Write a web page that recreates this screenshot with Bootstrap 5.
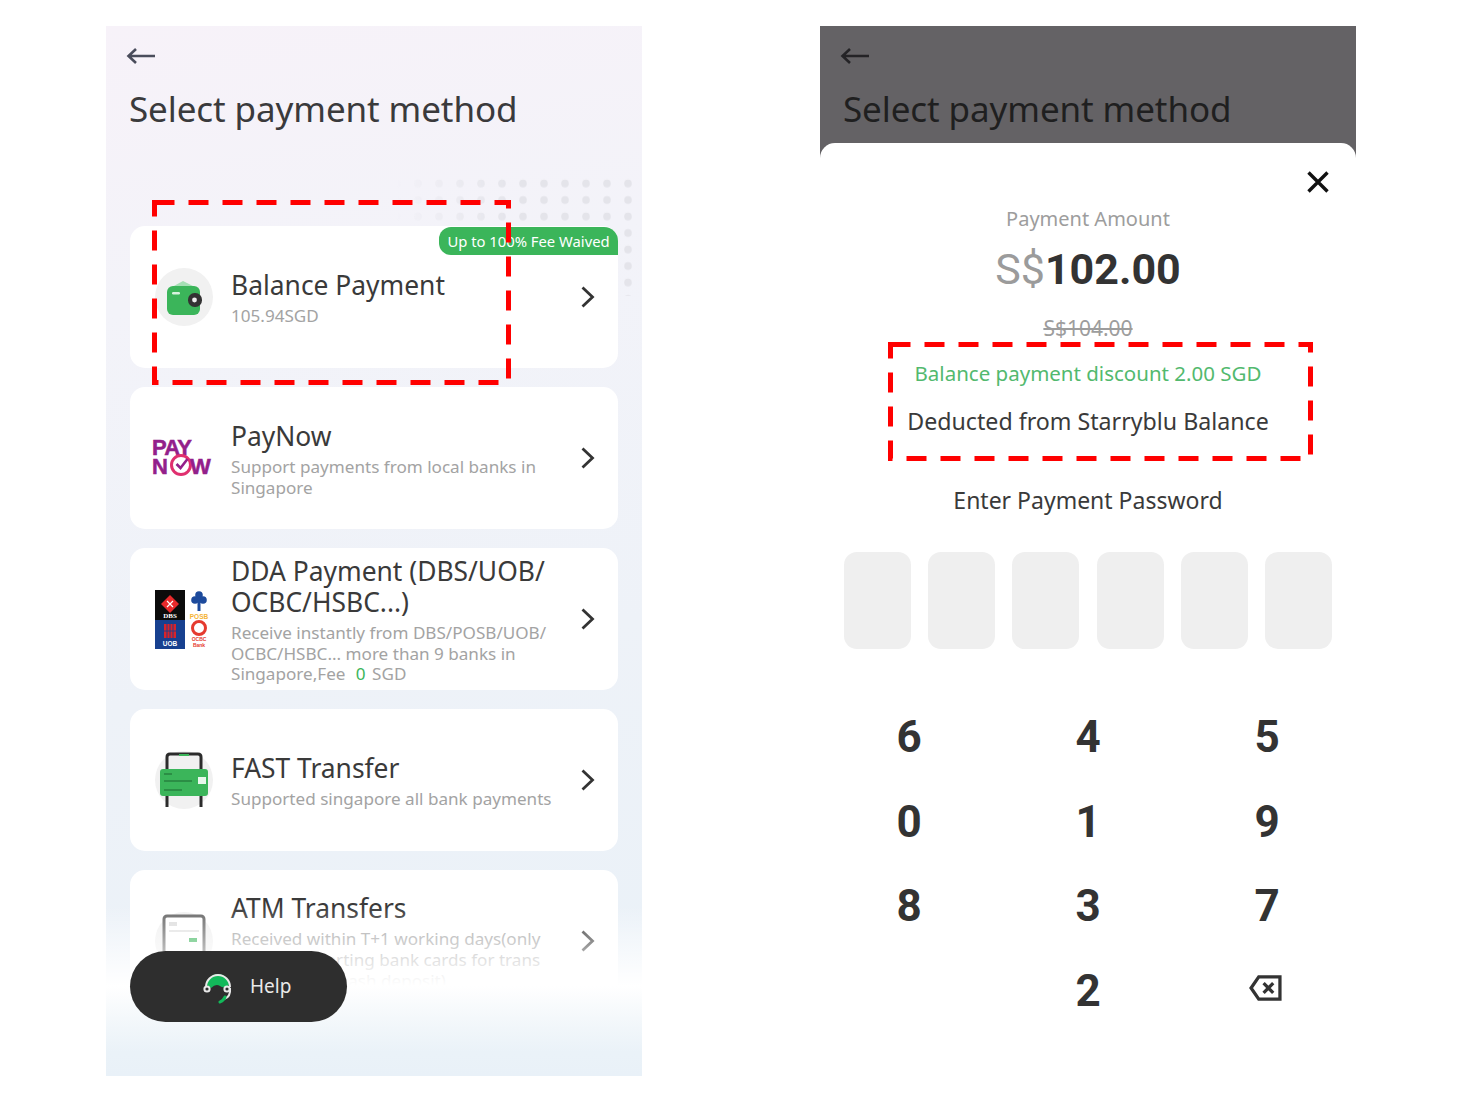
<!DOCTYPE html>
<html lang="en">
<head>
  <meta charset="UTF-8">
  <meta name="viewport" content="width=device-width, initial-scale=1.0">
  <title>Select payment method</title>
  <link rel="stylesheet" href="https://cdn.jsdelivr.net/npm/bootstrap@5.3.2/dist/css/bootstrap.min.css">
  <style>
    body { background: #fff; font-family: "Noto Sans", "Liberation Sans", sans-serif; color: #333; }
    .screens { padding: 26px 0 0 106px; gap: 178px; }
    .phone { width: 536px; height: 1050px; overflow: hidden; position: relative; }
    .phone-left { background: linear-gradient(170deg, #f7f2f9 0%, #f3f3f9 25%, #eef2f8 60%, #e9f1f8 100%); }
    .phone-right { background: #646265; }
    .back-arrow { display: block; margin: 20px 0 0 20px; }
    .page-title { font-size: 35px; font-weight: 400; line-height: 44px; margin: 21px 0 0 23px; color: #3a3a3c; letter-spacing: -.1px; }
    .phone-right .page-title { color: #1f1f20; margin-top: 21px; }
    .dots { position: absolute; left: 290px; top: 150px; }
    .pay-list { position: absolute; left: 24px; right: 24px; top: 200px; gap: 19px; }
    .pay-card { height: 142px; border: 0; border-radius: 15px; background: #fff; padding: 0 23px 0 25px; position: relative; flex-direction: row; align-items: center; }
    .pay-icon { width: 58px; height: 58px; flex: none; border-radius: 50%; background: #f1f1f1; margin-right: 18px; }
    .pay-icon.no-disc { background: transparent; }
    .pay-icon svg { display: block; overflow: visible; }
    .paynow-logo { margin: 8px 0 0 -3px; }
    .pay-body { width: 326px; flex: none; padding-top: 3px; }
    .pay-name { font-size: 26.4px; line-height: 31px; color: #3a3a3a; }
    .pay-desc { font-size: 17.1px; line-height: 20.7px; color: #a3a3a3; margin-top: 5px; }
    .pay-desc b { color: #3bb55a; font-weight: 400; padding: 0 2px 0 6px; }
    .atm-line-2 { display: block; padding-left: 55px; }
    .atm-line-3 { display: block; padding-left: 109px; }
    .pay-chevron { margin-left: auto; flex: none; }
    .fee-tag { position: absolute; right: 0; top: 1px; height: 28px; width: 179px; background: #3bb55a; color: #fff; font-size: 14.8px; line-height: 28px; text-align: center; border-radius: 12px 14px 0 12px; }
    .bottom-fade { position: absolute; left: 0; right: 0; bottom: 0; height: 170px; background: linear-gradient(180deg, rgba(255,255,255,0) 0%, rgba(255,255,255,.7) 33%, #fff 47%, #f4f8fb 66%, #eaf2f8 86%, #e9f1f8 100%); }
    .help-btn { position: absolute; left: 24px; top: 925px; width: 217px; height: 71px; border-radius: 36px; background: #2e2e2e; color: #e9e9e9; font-size: 19px; padding: 0 0 0 73px; gap: 17px; }
    .dash-box { position: absolute; }
    .sheet { position: absolute; left: 0; right: 0; top: 117px; bottom: 0; background: #fff; border-radius: 15px 15px 0 0; text-align: center; }
    .sheet-close { position: absolute; right: 27px; top: 28px; }
    .amount-label { font-size: 20px; line-height: 28px; color: #9d9d9d; padding-top: 62px; }
    .amount-now { font-family: Roboto, "Liberation Sans", sans-serif; font-size: 43px; line-height: 52px; font-weight: 700; color: #333; margin-top: 10px; }
    .amount-now span { font-weight: 400; color: #9b9b9b; }
    .amount-was { font-size: 21px; line-height: 28px; color: #9d9d9d; text-decoration: line-through; margin-top: 19px; }
    .discount-line { font-size: 20.5px; line-height: 28px; color: #52b96e; margin-top: 17px; }
    .source-line { font-size: 23.2px; line-height: 32px; color: #3a3a3a; margin-top: 18px; }
    .enter-line { font-size: 23px; line-height: 32px; color: #3a3a3a; margin-top: 47px; }
    .pin-row { padding: 0 24px; margin-top: 36px; justify-content: space-between; }
    .pin-box { width: 67px; height: 97px; border-radius: 13px; background: #efefef; }
    .key-grid { display: grid; grid-template-columns: repeat(3, 179px); justify-content: center; grid-auto-rows: 84.5px; margin-top: 46px; }
    .key-cell { font-family: Roboto, "Liberation Sans", sans-serif; font-size: 44px; font-weight: 700; color: #333; line-height: 84.5px; }
    .key-del { margin: -6px 4px 0 0; }
  </style>
</head>
<body>
  <div class="screens d-flex">

    <div class="phone phone-left">
      <svg class="back-arrow" width="30" height="20" viewBox="0 0 30 20" fill="none" stroke="#4a4d5c" stroke-width="2.6"><path d="M29 10H3M10 3L2.5 10l7.5 7"/></svg>
      <h1 class="page-title">Select payment method</h1>

      <svg class="dots" width="236" height="120">
        <defs>
          <pattern id="dotGrid" x="12" y="0" width="21" height="16.5" patternUnits="userSpaceOnUse"><circle cx="10" cy="7.5" r="3.8" fill="#e4e4ea"/></pattern>
          <linearGradient id="dotFade"><stop offset="0" stop-color="#fff" stop-opacity="0"/><stop offset=".5" stop-color="#fff" stop-opacity="1"/></linearGradient>
          <mask id="dotMask"><rect width="236" height="120" fill="url(#dotFade)"/></mask>
        </defs>
        <rect width="236" height="120" fill="url(#dotGrid)" mask="url(#dotMask)"/>
      </svg>

      <div class="pay-list d-flex flex-column">
        <div class="card pay-card">
          <div class="fee-tag">Up to 100% Fee Waived</div>
          <div class="pay-icon">
            <svg width="58" height="58" viewBox="0 0 58 58"><path d="M17 19l11-6 12 6z" fill="#a5dfb4"/><rect x="12" y="18" width="33" height="29" rx="6" fill="#3bb55a"/><rect x="17" y="24" width="8" height="2.4" rx="1.2" fill="#d7f2de"/><rect x="33" y="25" width="14" height="14" rx="6.5" fill="#333"/><circle cx="39.5" cy="32" r="2.4" fill="#eee"/></svg>
          </div>
          <div class="pay-body">
            <div class="pay-name">Balance Payment</div>
            <div class="pay-desc">105.94SGD</div>
          </div>
          <svg class="pay-chevron" width="15" height="22" viewBox="0 0 15 22" fill="none" stroke="#333" stroke-width="2.8"><path d="M2.5 1.5l10 9.5-10 9.5"/></svg>
        </div>

        <div class="card pay-card">
          <div class="pay-icon no-disc">
            <svg class="paynow-logo" width="62" height="40" viewBox="0 0 62 40" font-family="Liberation Sans, sans-serif" font-weight="700" fill="#93208a" font-size="22" stroke="#93208a" stroke-width=".5">
              <text x="0" y="18" textLength="40">PAY</text>
              <text x="0" y="37">N</text>
              <circle cx="29" cy="28" r="9.500" fill="none" stroke="#e0306f" stroke-width="3"/>
              <path d="M24.500 27l4 4 7-9" fill="none" stroke-width="2.600"/>
              <text x="38" y="37" textLength="23">W</text>
            </svg>
          </div>
          <div class="pay-body">
            <div class="pay-name">PayNow</div>
            <div class="pay-desc">Support payments from local banks in Singapore</div>
          </div>
          <svg class="pay-chevron" width="15" height="22" viewBox="0 0 15 22" fill="none" stroke="#333" stroke-width="2.8"><path d="M2.5 1.5l10 9.5-10 9.5"/></svg>
        </div>

        <div class="card pay-card">
          <div class="pay-icon no-disc">
            <svg width="58" height="60" viewBox="0 0 58 60" font-family="Liberation Sans, sans-serif" font-weight="700">
              <rect width="30" height="30" fill="#0b0b0b"/>
              <rect y="30" width="30" height="29" fill="#17408f"/>
              <path d="M15 5l9 9-9 9-9-9z" fill="#e8292b"/><path d="M12 11l6 6M18 11l-6 6" stroke="#fff" stroke-width="1.2"/>
              <text x="15" y="28" font-size="7" fill="#fff" text-anchor="middle" font-family="Liberation Serif, serif">DBS</text>
              <path d="M9 34h12v14H9z" fill="#d8232a"/><path d="M12 34v14M15 34v14M18 34v14M9 41h12" stroke="#17408f" stroke-width=".9"/>
              <text x="15" y="56" font-size="6.5" fill="#fff" text-anchor="middle">UOB</text>
              <circle cx="44" cy="5" r="3.8" fill="#1d4a9c"/><circle cx="40" cy="10" r="3.8" fill="#1d4a9c"/><circle cx="48" cy="10" r="3.8" fill="#1d4a9c"/><path d="M44 8v13" stroke="#1d4a9c" stroke-width="3"/>
              <text x="44" y="29" font-size="6.5" fill="#f5b335" text-anchor="middle">POSB</text>
              <circle cx="44" cy="38" r="6.5" fill="none" stroke="#e53a2f" stroke-width="3"/>
              <text x="44" y="51" font-size="5" fill="#e53a2f" text-anchor="middle">OCBC</text>
              <text x="44" y="57" font-size="5" fill="#e53a2f" text-anchor="middle">Bank</text>
            </svg>
          </div>
          <div class="pay-body">
            <div class="pay-name">DDA Payment (DBS/UOB/ OCBC/HSBC...)</div>
            <div class="pay-desc">Receive instantly from DBS/POSB/UOB/ OCBC/HSBC... more than 9 banks in Singapore,Fee <b>0</b> SGD</div>
          </div>
          <svg class="pay-chevron" width="15" height="22" viewBox="0 0 15 22" fill="none" stroke="#333" stroke-width="2.8"><path d="M2.5 1.5l10 9.5-10 9.5"/></svg>
        </div>

        <div class="card pay-card">
          <div class="pay-icon">
            <svg width="58" height="60" viewBox="0 0 58 60" fill="none"><path d="M12 56V6q0-3 3-3h28q3 0 3 3v50" stroke="#2c2c2c" stroke-width="3"/><rect x="24" y="3" width="10" height="2" fill="#3bb55a"/><rect x="5" y="18" width="48" height="27" rx="3" fill="#3bb55a"/><rect x="43" y="26" width="8" height="7" fill="#e8f7ec"/><path d="M9 30h28M9 39h18M9 23h8" stroke="#2b8e45" stroke-width="2"/></svg>
          </div>
          <div class="pay-body">
            <div class="pay-name">FAST Transfer</div>
            <div class="pay-desc">Supported singapore all bank payments</div>
          </div>
          <svg class="pay-chevron" width="15" height="22" viewBox="0 0 15 22" fill="none" stroke="#333" stroke-width="2.8"><path d="M2.5 1.5l10 9.5-10 9.5"/></svg>
        </div>

        <div class="card pay-card">
          <div class="pay-icon">
            <svg width="58" height="60" viewBox="0 0 58 60" fill="none"><rect x="9" y="4" width="40" height="38" rx="3" fill="#fff" stroke="#666" stroke-width="3"/><rect x="14" y="10" width="8" height="4" fill="#ddd"/><path d="M14 19h30" stroke="#e2e2e2" stroke-width="2"/><rect x="34" y="26" width="8" height="4" fill="#3bb55a"/><rect x="9" y="42" width="40" height="18" fill="#777"/><path d="M15 47h28" stroke="#3bb55a" stroke-width="2"/></svg>
          </div>
          <div class="pay-body">
            <div class="pay-name">ATM Transfers</div>
            <div class="pay-desc">Received within T+1 working days(only<span class="atm-line-2">supporting bank cards for trans</span><span class="atm-line-3">cash deposit)</span></div>
          </div>
          <svg class="pay-chevron" width="15" height="22" viewBox="0 0 15 22" fill="none" stroke="#333" stroke-width="2.8"><path d="M2.5 1.5l10 9.5-10 9.5"/></svg>
        </div>
      </div>

      <div class="bottom-fade"></div>

      <div class="help-btn d-flex align-items-center">
        <svg width="30" height="34" viewBox="0 0 30 34" fill="none"><path d="M4 15a11 11 0 0 1 22 0q-5 4-9 1t-9 2z" fill="#12b95a"/><path d="M3 17a12 12 0 0 1 24 0" stroke="#e9e9e9" stroke-width="2"/><circle cx="4" cy="19" r="2.6" stroke="#e9e9e9" stroke-width="2"/><circle cx="24" cy="19" r="2.6" stroke="#e9e9e9" stroke-width="2"/><path d="M27 18q1 9-6 11" stroke="#e9e9e9" stroke-width="2"/><path d="M22 27q-1 3-5 5" stroke="#12b95a" stroke-width="3" stroke-linecap="round"/></svg>
        <span>Help</span>
      </div>

      <svg class="dash-box" style="left:46px;top:174px" width="360" height="186" fill="none" stroke="#f00" stroke-width="5"><rect x="2.5" y="2.5" width="354" height="180" stroke-dasharray="20 14"/></svg>
    </div>

    <div class="phone phone-right">
      <svg class="back-arrow" width="30" height="20" viewBox="0 0 30 20" fill="none" stroke="#242326" stroke-width="2.6"><path d="M29 10H3M10 3L2.5 10l7.5 7"/></svg>
      <h1 class="page-title">Select payment method</h1>

      <div class="sheet">
        <svg class="sheet-close" width="22" height="22" viewBox="0 0 22 22" stroke="#111" stroke-width="3.4"><path d="M1.5 1.5l19 19M20.5 1.5l-19 19"/></svg>
        <div class="amount-label">Payment Amount</div>
        <div class="amount-now"><span>S$</span>102.00</div>
        <div class="amount-was">S$104.00</div>
        <div class="discount-line">Balance payment discount 2.00 SGD</div>
        <div class="source-line">Deducted from Starryblu Balance</div>
        <div class="enter-line">Enter Payment Password</div>

        <div class="pin-row d-flex">
          <div class="pin-box"></div>
          <div class="pin-box"></div>
          <div class="pin-box"></div>
          <div class="pin-box"></div>
          <div class="pin-box"></div>
          <div class="pin-box"></div>
        </div>

        <div class="key-grid">
          <div class="key-cell">6</div><div class="key-cell">4</div><div class="key-cell">5</div>
          <div class="key-cell">0</div><div class="key-cell">1</div><div class="key-cell">9</div>
          <div class="key-cell">8</div><div class="key-cell">3</div><div class="key-cell">7</div>
          <div class="key-cell"></div><div class="key-cell">2</div>
          <div class="key-cell d-flex align-items-center justify-content-center">
            <svg class="key-del" width="33" height="26" viewBox="0 0 34 27" fill="none" stroke="#333" stroke-width="3.400"><path d="M10 2h22v23H10L2 13.500z"/><path d="M15 8.500l10 10M25 8.500l-10 10"/></svg>
          </div>
        </div>
      </div>

      <svg class="dash-box" style="left:68px;top:316px" width="425" height="119" fill="none" stroke="#f00" stroke-width="5"><rect x="2.500" y="2.500" width="420" height="114" stroke-dasharray="20 14"/></svg>
    </div>

  </div>
  <script src="https://cdn.jsdelivr.net/npm/bootstrap@5.3.2/dist/js/bootstrap.bundle.min.js"></script>
</body>
</html>
